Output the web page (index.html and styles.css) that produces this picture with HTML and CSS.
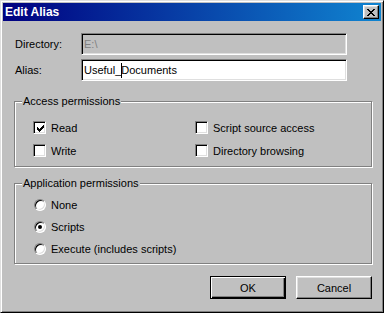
FILE: index.html
```html
<!DOCTYPE html>
<html lang="en">
<head>
  <meta charset="UTF-8">
  <title>Edit Alias</title>
  <link rel="stylesheet" href="styles.css">
</head>
<body>
  <div class="window">
    <!-- Title bar -->
    <div class="title-bar">
      <span class="title-text">Edit Alias</span>
      <button class="close-btn" aria-label="Close">
        <svg width="8" height="7" viewBox="0 0 8 7" shape-rendering="crispEdges">
          <path d="M0 0h2v1h-2zM6 0h2v1h-2zM1 1h2v1h-2zM5 1h2v1h-2zM2 2h4v1h-4zM3 3h2v1h-2zM2 4h4v1h-4zM1 5h2v1h-2zM5 5h2v1h-2zM0 6h2v1h-2zM6 6h2v1h-2z" fill="#000"/>
        </svg>
      </button>
    </div>

    <div class="dialog-body">
      <!-- Fields -->
      <div class="field-row first">
        <label class="field-label">Directory:</label>
        <div class="text-input disabled">E:\</div>
      </div>
      <div class="field-row">
        <label class="field-label">Alias:</label>
        <div class="text-input">Useful_<span class="caret"></span>Documents</div>
      </div>

      <!-- Access permissions -->
      <div class="group access">
        <span class="group-title">Access permissions</span>
        <div class="check-grid">
          <div class="option">
            <span class="checkbox">
              <svg width="7" height="7" viewBox="0 0 7 7" shape-rendering="crispEdges">
                <path d="M6 0h1v3h-1zM5 1h1v3h-1zM4 2h1v3h-1zM3 3h1v3h-1zM2 4h1v3h-1zM1 3h1v3h-1zM0 2h1v3h-1z" fill="#000"/>
              </svg>
            </span>
            <span>Read</span>
          </div>
          <div class="option">
            <span class="checkbox"></span>
            <span>Script source access</span>
          </div>
          <div class="option">
            <span class="checkbox"></span>
            <span>Write</span>
          </div>
          <div class="option">
            <span class="checkbox"></span>
            <span>Directory browsing</span>
          </div>
        </div>
      </div>

      <!-- Application permissions -->
      <div class="group app">
        <span class="group-title">Application permissions</span>
        <div class="radio-list">
          <div class="option">
            <span class="radio"></span>
            <span>None</span>
          </div>
          <div class="option">
            <span class="radio checked"></span>
            <span>Scripts</span>
          </div>
          <div class="option">
            <span class="radio"></span>
            <span>Execute (includes scripts)</span>
          </div>
        </div>
      </div>

      <!-- Buttons -->
      <div class="button-row">
        <button class="btn default"><span>OK</span></button>
        <button class="btn"><span>Cancel</span></button>
      </div>
    </div>
  </div>
</body>
</html>
```

FILE: styles.css
```css
/* General Styles */
:root {
  --face: #c0c0c0;
  --shadow: #808080;
  --light: #dfdfdf;
  --white: #ffffff;
  --dark: #000000;
}

body {
  margin: 0;
  padding: 0;
  background: var(--face);
  font-family: "Liberation Sans", Arial, sans-serif;
  font-size: 11px;
  color: #000;
}

.window {
  box-sizing: border-box;
  width: 384px;
  height: 313px;
  padding: 2px;
  background: var(--face);
  border: 1px solid;
  border-color: var(--light) var(--dark) var(--dark) var(--light);
  box-shadow: inset 1px 1px 0 var(--white), inset -1px -1px 0 var(--shadow);
}

/* Title bar */
.title-bar {
  height: 18px;
  display: flex;
  align-items: center;
  justify-content: space-between;
  padding: 0 2px 0 2px;
  background: linear-gradient(to right, #000080, #1084d0);
}

.title-text {
  color: #fff;
  font-weight: bold;
  font-size: 12px;
  line-height: 14px;
}

.close-btn {
  box-sizing: border-box;
  width: 16px;
  height: 14px;
  padding: 0;
  display: flex;
  align-items: center;
  justify-content: center;
  background: var(--face);
  border: 1px solid;
  border-color: var(--white) var(--dark) var(--dark) var(--white);
  box-shadow: inset -1px -1px 0 var(--shadow), inset 1px 1px 0 var(--light);
}

.close-btn svg {
  display: block;
  margin-left: -1px;
}

/* Body */
.dialog-body {
  padding: 0 0 0 11px;
}

.field-row {
  display: flex;
  align-items: center;
  margin-top: 4px;
}

.field-row.first {
  margin-top: 12px;
}

.field-label {
  width: 66px;
  padding-left: 1px;
}

.text-input {
  box-sizing: border-box;
  width: 266px;
  height: 22px;
  padding: 0 2px;
  display: flex;
  align-items: center;
  background: var(--white);
  border: 1px solid;
  border-color: var(--shadow) var(--white) var(--white) var(--shadow);
  box-shadow: inset 1px 1px 0 var(--dark), inset -1px -1px 0 var(--light);
  white-space: pre;
}

.text-input.disabled {
  background: var(--face);
  color: var(--shadow);
}

.caret {
  display: inline-block;
  width: 1px;
  height: 15px;
  margin-right: -1px;
  background: #000;
}

/* Group boxes */
.group {
  position: relative;
  box-sizing: border-box;
  width: 358px;
  border: 1px solid var(--shadow);
  box-shadow: 1px 1px 0 var(--white), inset 1px 1px 0 var(--white);
}

.group.access {
  height: 66px;
  margin-top: 20px;
  padding: 14px 0 0 18px;
}

.group.app {
  height: 81px;
  margin-top: 16px;
  padding: 10px 0 0 19px;
}

.group-title {
  position: absolute;
  top: -7px;
  left: 7px;
  padding: 0 1px;
  line-height: 13px;
  background: var(--face);
}

.check-grid {
  display: grid;
  grid-template-columns: 162px auto;
  grid-auto-rows: 23px;
}

.radio-list {
  display: flex;
  flex-direction: column;
}

.radio-list .option {
  height: 22px;
}

.option {
  display: flex;
  align-items: center;
}

.checkbox {
  box-sizing: border-box;
  width: 13px;
  height: 13px;
  margin-right: 5px;
  display: flex;
  align-items: center;
  justify-content: center;
  background: var(--white);
  border: 1px solid;
  border-color: var(--shadow) var(--white) var(--white) var(--shadow);
  box-shadow: inset 1px 1px 0 var(--dark), inset -1px -1px 0 var(--light);
}

.checkbox svg {
  display: block;
  margin: 1px 0 0 1px;
}

.radio {
  position: relative;
  box-sizing: border-box;
  width: 12px;
  height: 12px;
  margin-right: 5px;
  border-radius: 50%;
  background: var(--white);
  border: 1px solid;
  border-color: var(--shadow) var(--white) var(--white) var(--shadow);
  box-shadow: inset 1px 1px 0 var(--dark), inset -1px -1px 0 var(--light);
}

.radio.checked::after {
  content: "";
  position: absolute;
  top: 3px;
  left: 3px;
  width: 4px;
  height: 4px;
  border-radius: 50%;
  background: #000;
}

/* Buttons */
.button-row {
  display: flex;
  gap: 10px;
  width: 358px;
  justify-content: flex-end;
  margin-top: 12px;
}

.btn {
  box-sizing: border-box;
  width: 76px;
  height: 23px;
  padding: 0;
  font-family: inherit;
  font-size: 11px;
  color: #000;
  background: var(--face);
  border: 1px solid;
  border-color: var(--white) var(--dark) var(--dark) var(--white);
  box-shadow: inset -1px -1px 0 var(--shadow), inset 1px 1px 0 var(--light);
}

.btn.default {
  border: 1px solid var(--dark);
  box-shadow: inset 1px 1px 0 var(--white), inset -1px -1px 0 var(--dark), inset -2px -2px 0 var(--shadow);
}
```
